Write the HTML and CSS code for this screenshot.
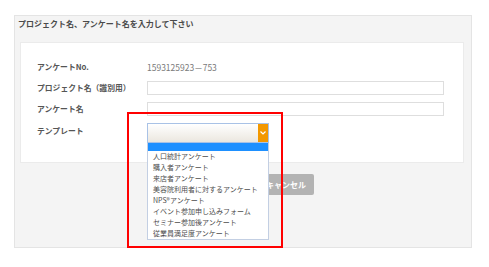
FILE: index.html
```html
<!DOCTYPE html>
<html lang="ja">
<head>
    <meta charset="UTF-8">
    <title>アンケート作成</title>
    <link rel="stylesheet" href="styles.css">
</head>
<body>
    <div class="panel">
        <div class="panel-title">プロジェクト名、アンケート名を入力して下さい</div>
        <div class="form-box">
            <div class="row">
                <div class="label">アンケートNo.</div>
                <div class="value">1593125923－753</div>
            </div>
            <div class="row">
                <div class="label">プロジェクト名（識別用）</div>
                <div class="text-input"></div>
            </div>
            <div class="row">
                <div class="label">アンケート名</div>
                <div class="text-input"></div>
            </div>
            <div class="row row-select">
                <div class="label">テンプレート</div>
                <div class="select-wrap">
                    <div class="select-box">
                        <span class="select-arrow">
                            <svg width="6" height="4" viewBox="0 0 6 4"><path d="M0.5 0.5 L3 3 L5.5 0.5" fill="none" stroke="#fff" stroke-width="1.2"/></svg>
                        </span>
                    </div>
                    <ul class="select-list">
                        <li class="selected">&nbsp;</li>
                        <li>人口統計アンケート</li>
                        <li>購入者アンケート</li>
                        <li>来店者アンケート</li>
                        <li>美容院利用者に対するアンケート</li>
                        <li>NPS®アンケート</li>
                        <li>イベント参加申し込みフォーム</li>
                        <li>セミナー参加後アンケート</li>
                        <li>従業員満足度アンケート</li>
                    </ul>
                </div>
            </div>
        </div>
        <div class="buttons">
            <button class="btn btn-cancel">キャンセル</button>
        </div>
    </div>

    <div class="highlight"></div>
</body>
</html>
```

FILE: styles.css
```css
body {
    margin: 0;
    background-color: #fff;
    font-family: "Noto Sans CJK JP", "Noto Sans", sans-serif;
    color: #555;
}

.panel {
    width: 458px;
    margin: 15px 0 0 14px;
    box-sizing: border-box;
    border: 1px solid #e4e4e4;
    background-color: #f4f4f4;
    padding-bottom: 52px;
}

.panel-title {
    height: 26px;
    box-sizing: border-box;
    padding: 2px 0 0 3px;
    font-size: 8px;
    line-height: 12px;
    font-weight: bold;
    color: #4a4a4a;
}

.form-box {
    margin: 0 7px 0 5px;
    background-color: #fff;
    border: 1px solid #ebebeb;
    padding: 17px 0 19px 16px;
    display: flex;
    flex-direction: column;
    gap: 7px;
}

.row {
    display: flex;
    align-items: center;
    height: 14px;
}

.row-select {
    height: 20px;
    align-items: flex-start;
}

.label {
    width: 110px;
    flex-shrink: 0;
    font-size: 7.8px;
    line-height: 12px;
    font-weight: bold;
    color: #555;
}

.row-select .label {
    padding-top: 2px;
}

.value {
    font-size: 8.5px;
    color: #7a7a7a;
}

.text-input {
    width: 297px;
    height: 14px;
    box-sizing: border-box;
    border: 1px solid #dedede;
    background-color: #fff;
}

.select-wrap {
    position: relative;
    width: 122px;
}

.select-box {
    height: 20px;
    box-sizing: border-box;
    border: 1px solid #a9c2e6;
    background: linear-gradient(#ffffff, #ebe7df);
    display: flex;
    justify-content: flex-end;
}

.select-arrow {
    width: 10px;
    background-color: #f39800;
    display: flex;
    align-items: center;
    justify-content: center;
}

.select-list {
    position: absolute;
    top: 20px;
    left: 0;
    width: 122px;
    box-sizing: border-box;
    margin: 0;
    padding: 0;
    list-style: none;
    background-color: #fff;
    border: 1px solid #c3cfe3;
    border-top: none;
    z-index: 10;
}

.select-list li {
    height: 11px;
    padding-left: 5px;
    font-size: 7px;
    line-height: 11px;
    color: #4d4d4d;
    white-space: nowrap;
}

.select-list li.selected {
    height: 8px;
    background-color: #1e90ff;
}

.buttons {
    display: flex;
    margin-top: 11px;
    padding-left: 243px;
}

.btn {
    height: 21px;
    border: none;
    border-radius: 2px;
    font-family: inherit;
    font-size: 8px;
    font-weight: bold;
    color: #fff;
    padding: 0;
}

.btn-cancel {
    width: 56px;
    background-color: #b3b3b3;
}

.highlight {
    position: absolute;
    left: 127px;
    top: 112px;
    width: 156px;
    height: 136px;
    box-sizing: border-box;
    border: 2px solid #f00;
    z-index: 20;
}
```
